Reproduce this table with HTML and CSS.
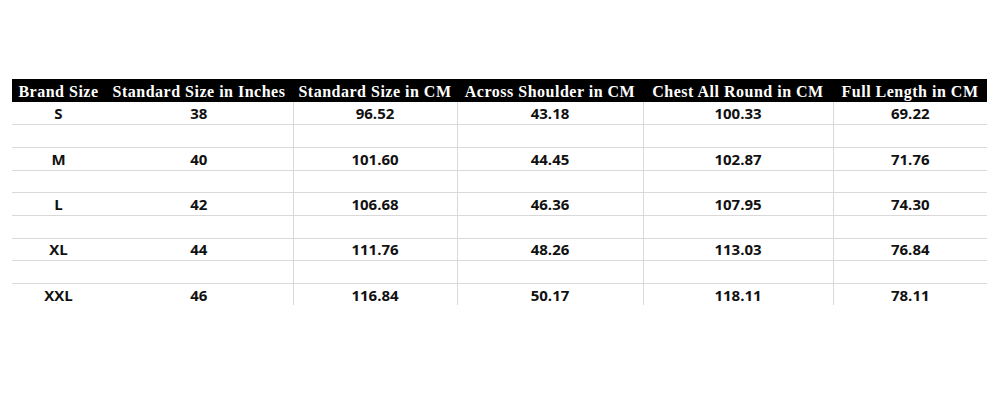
FILE: index.html
```html
<!DOCTYPE html>
<html>
<head>
<meta charset="utf-8">
<link rel="stylesheet" href="styles.css">
</head>
<body>
<div class="frame">
<table class="sizes">
<colgroup>
<col class="c1"><col class="c2"><col class="c3"><col class="c4"><col class="c5"><col class="c6">
</colgroup>
<thead>
<tr>
<th>Brand Size</th><th>Standard Size in Inches</th><th>Standard Size in CM</th><th>Across Shoulder in CM</th><th>Chest All Round in CM</th><th>Full Length in CM</th>
</tr>
</thead>
<tbody>
<tr><td>S</td><td>38</td><td>96.52</td><td>43.18</td><td>100.33</td><td>69.22</td></tr>
<tr class="gap"><td></td><td></td><td></td><td></td><td></td><td></td></tr>
<tr><td>M</td><td>40</td><td>101.60</td><td>44.45</td><td>102.87</td><td>71.76</td></tr>
<tr class="gap"><td></td><td></td><td></td><td></td><td></td><td></td></tr>
<tr><td>L</td><td>42</td><td>106.68</td><td>46.36</td><td>107.95</td><td>74.30</td></tr>
<tr class="gap"><td></td><td></td><td></td><td></td><td></td><td></td></tr>
<tr><td>XL</td><td>44</td><td>111.76</td><td>48.26</td><td>113.03</td><td>76.84</td></tr>
<tr class="gap"><td></td><td></td><td></td><td></td><td></td><td></td></tr>
<tr><td>XXL</td><td>46</td><td>116.84</td><td>50.17</td><td>118.11</td><td>78.11</td></tr>
<tr class="gap"><td></td><td></td><td></td><td></td><td></td><td></td></tr>
</tbody>
</table>
</div>
</body>
</html>
```
FILE: styles.css
```css
html, body {
  margin: 0;
  padding: 0;
  background: #ffffff;
}
.frame {
  margin: 79px 0 0 12px;
  width: 975px;
  height: 226px;
  overflow: hidden;
}
.sizes {
  width: 975px;
  table-layout: fixed;
  border-collapse: collapse;
  border-spacing: 0;
}
.c1 { width: 93px; }
.c2 { width: 188px; }
.c3 { width: 164px; }
.c4 { width: 186px; }
.c5 { width: 190px; }
.c6 { width: 154px; }
.sizes th {
  background: #000000;
  color: #ffffff;
  font-family: "Liberation Serif", "Times New Roman", serif;
  font-weight: bold;
  font-size: 16px;
  height: 23px;
  padding: 2px 0 0 0;
  box-sizing: border-box;
  text-align: center;
  white-space: nowrap;
  vertical-align: middle;
  letter-spacing: 0.5px;
  line-height: 19px;
}
.sizes td {
  font-family: "Open Sans", "Noto Sans", sans-serif;
  font-weight: 700;
  font-size: 15px;
  color: #111111;
  height: 22.7px;
  padding: 1px 0 0 0;
  box-sizing: border-box;
  text-align: center;
  vertical-align: middle;
  border-bottom: 1px solid #d9d9d9;
  line-height: 19px;
}
.sizes td:nth-child(3),
.sizes td:nth-child(4),
.sizes td:nth-child(5),
.sizes td:nth-child(6) {
  border-left: 1px solid #d9d9d9;
}
```
